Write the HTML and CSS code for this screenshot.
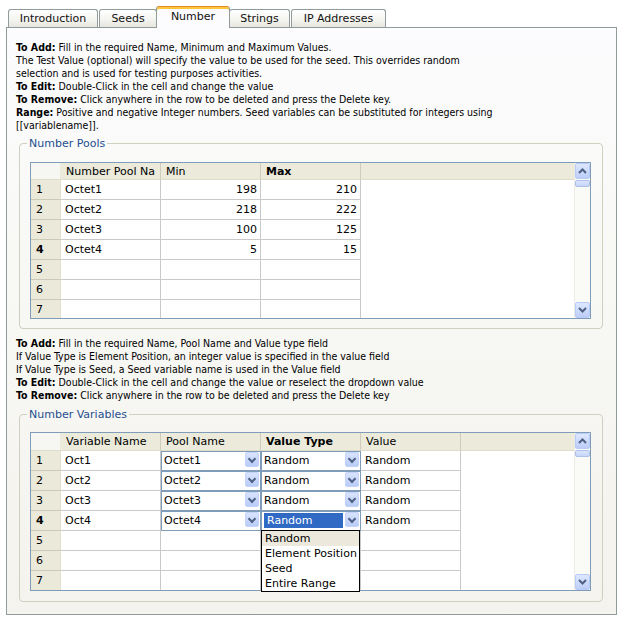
FILE: index.html
```html
<!DOCTYPE html>
<html>
<head>
<meta charset="utf-8">
<link rel="stylesheet" href="styles.css">
</head>
<body>
<div class="tabs">
  <div class="tab t-intro">Introduction</div>
  <div class="tab t-seeds">Seeds</div>
  <div class="tab t-number active">Number</div>
  <div class="tab t-strings">Strings</div>
  <div class="tab t-ip">IP Addresses</div>
</div>
<div class="panel">
  <p class="help help1"><b>To Add:</b> Fill in the required Name, Minimum and Maximum Values.<br>The Test Value (optional) will specify the value to be used for the seed. This overrides random<br>selection and is used for testing purposes activities.<br><b>To Edit:</b> Double-Click in the cell and change the value<br><b>To Remove:</b> Click anywhere in the row to be deleted and press the Delete key.<br><b>Range:</b> Positive and negative Integer numbers. Seed variables can be substituted for integers using<br>[[variablename]].</p>

  <fieldset class="group group1">
    <legend>Number Pools</legend>
    <div class="grid grid1">
      <div class="grid-body">
        <table class="tbl">
          <colgroup><col class="c-rh"><col class="c-w"><col class="c-w"><col class="c-w"><col></colgroup>
          <tr class="hdr"><th class="corner"></th><th>Number Pool Na</th><th>Min</th><th class="bold">Max</th><th class="fill"></th></tr>
          <tr><td class="rh">1</td><td>Octet1</td><td class="num">198</td><td class="num">210</td><td class="fill"></td></tr>
          <tr><td class="rh">2</td><td>Octet2</td><td class="num">218</td><td class="num">222</td><td class="fill"></td></tr>
          <tr><td class="rh">3</td><td>Octet3</td><td class="num">100</td><td class="num">125</td><td class="fill"></td></tr>
          <tr><td class="rh bold">4</td><td>Octet4</td><td class="num">5</td><td class="num">15</td><td class="fill"></td></tr>
          <tr><td class="rh">5</td><td></td><td></td><td></td><td class="fill"></td></tr>
          <tr><td class="rh">6</td><td></td><td></td><td></td><td class="fill"></td></tr>
          <tr class="last"><td class="rh">7</td><td></td><td></td><td></td><td class="fill"></td></tr>
        </table>
      </div>
      <div class="vscroll">
        <div class="sbtn"><svg width="9" height="6" viewBox="0 0 9 6"><polyline points="1,5 4.5,1.5 8,5" fill="none" stroke="#4d6185" stroke-width="2"/></svg></div>
        <div class="thumb"></div>
        <div class="track"></div>
        <div class="sbtn"><svg width="9" height="6" viewBox="0 0 9 6"><polyline points="1,1 4.5,4.5 8,1" fill="none" stroke="#4d6185" stroke-width="2"/></svg></div>
      </div>
    </div>
  </fieldset>

  <p class="help help2"><b>To Add:</b> Fill in the required Name, Pool Name and Value type field<br>If Value Type is Element Position, an integer value is specified in the value field<br>If Value Type is Seed, a Seed variable name is used in the Value field<br><b>To Edit:</b> Double-Click in the cell and change the value or reselect the dropdown value<br><b>To Remove:</b> Click anywhere in the row to be deleted and press the Delete key</p>

  <fieldset class="group group2">
    <legend>Number Variables</legend>
    <div class="grid grid2">
      <div class="grid-body">
        <table class="tbl">
          <colgroup><col class="c-rh"><col class="c-w"><col class="c-w"><col class="c-w"><col class="c-w"><col></colgroup>
          <tr class="hdr"><th class="corner"></th><th>Variable Name</th><th>Pool Name</th><th class="bold">Value Type</th><th>Value</th><th class="fill"></th></tr>
          <tr><td class="rh">1</td><td>Oct1</td><td class="combo"><div class="cb"><span class="cb-text">Octet1</span><span class="cb-btn"></span></div></td><td class="combo"><div class="cb"><span class="cb-text">Random</span><span class="cb-btn"></span></div></td><td>Random</td><td class="fill"></td></tr>
          <tr><td class="rh">2</td><td>Oct2</td><td class="combo"><div class="cb"><span class="cb-text">Octet2</span><span class="cb-btn"></span></div></td><td class="combo"><div class="cb"><span class="cb-text">Random</span><span class="cb-btn"></span></div></td><td>Random</td><td class="fill"></td></tr>
          <tr><td class="rh">3</td><td>Oct3</td><td class="combo"><div class="cb"><span class="cb-text">Octet3</span><span class="cb-btn"></span></div></td><td class="combo"><div class="cb"><span class="cb-text">Random</span><span class="cb-btn"></span></div></td><td>Random</td><td class="fill"></td></tr>
          <tr><td class="rh bold">4</td><td>Oct4</td><td class="combo"><div class="cb"><span class="cb-text">Octet4</span><span class="cb-btn"></span></div></td><td class="combo"><div class="cb open"><span class="cb-text sel">Random</span><span class="cb-btn"></span>
              <ul class="dropdown">
                <li class="hover">Random</li>
                <li>Element Position</li>
                <li>Seed</li>
                <li>Entire Range</li>
              </ul></div></td><td>Random</td><td class="fill"></td></tr>
          <tr><td class="rh">5</td><td></td><td></td><td></td><td></td><td class="fill"></td></tr>
          <tr><td class="rh">6</td><td></td><td></td><td></td><td></td><td class="fill"></td></tr>
          <tr class="last"><td class="rh">7</td><td></td><td></td><td></td><td></td><td class="fill"></td></tr>
        </table>
      </div>
      <div class="vscroll">
        <div class="sbtn"><svg width="9" height="6" viewBox="0 0 9 6"><polyline points="1,5 4.5,1.5 8,5" fill="none" stroke="#4d6185" stroke-width="2"/></svg></div>
        <div class="thumb"></div>
        <div class="track"></div>
        <div class="sbtn"><svg width="9" height="6" viewBox="0 0 9 6"><polyline points="1,1 4.5,4.5 8,1" fill="none" stroke="#4d6185" stroke-width="2"/></svg></div>
      </div>
    </div>
  </fieldset>
</div>
</body>
</html>
```

FILE: styles.css
```css
* { box-sizing: border-box; }
html, body { margin: 0; padding: 0; background: #fff; }
body {
  font-family: "DejaVu Sans Condensed", "DejaVu Sans", sans-serif;
  font-stretch: condensed;
  font-size: 10.5px;
  color: #000;
}

/* wide (Verdana-like) text */
.tab, .group legend, .tbl th, .tbl td, .cb-text {
  font-family: "DejaVu Sans", sans-serif;
  font-stretch: normal;
  font-size: 11px;
}

/* tabs */
.tabs {
  display: flex;
  align-items: flex-end;
  height: 27px;
  padding-left: 8px;
}
.tab {
  height: 18px;
  margin-right: 1px;
  border: 1px solid #919b9c;
  border-bottom: none;
  border-radius: 3px 3px 0 0;
  background: linear-gradient(#ffffff, #f3f3ef 60%, #e6e5de);
  text-align: center;
  line-height: 17px;
  color: #111;
}
.t-intro { width: 90px; }
.t-seeds { width: 58px; }
.t-number { width: 70px; }
.t-strings { width: 61px; }
.t-ip { width: 95px; }
.tab.active {
  position: relative;
  z-index: 2;
  height: 22px;
  width: 74px;
  margin: 0 -1px -1px -2px;
  background: #fcfcfe;
  border-top: 1px solid #e68b2c;
  box-shadow: inset 0 2px 0 #ffc73c;
  line-height: 20px;
}

/* panel */
.panel {
  margin-left: 6px;
  width: 611px;
  height: 588px;
  border: 1px solid #919b9c;
  background: linear-gradient(#fcfcfe, #f8f8f5 40%, #f4f3ee);
  padding: 13px 13px 12px 9px;
}
.help {
  margin: 0;
  line-height: 13px;
  white-space: nowrap;
}
.help b { font-weight: bold; }
.help2 { margin-top: 8px; }

.group {
  margin: 5px 0 0 3px;
  border: 1px solid #d0d0bf;
  border-radius: 4px;
  padding: 12px 11px 9px 10px;
  min-width: 0;
}
.group2 { margin-top: 6px; padding-top: 11px; padding-bottom: 10px; }
.group legend {
  margin-left: -3px;
  padding: 0 2px;
  color: #1f4f8f;
  line-height: 13px;
}

/* grid */
.grid {
  display: flex;
  border: 1px solid #7f9db9;
  background: #fff;
}
.grid1 { height: 157px; }
.grid2 { height: 159px; }
.grid-body { flex: 1; min-width: 0; }
.tbl {
  width: 100%;
  table-layout: fixed;
  border-collapse: separate;
  border-spacing: 0;
}
.c-rh { width: 30px; }
.c-w { width: 100px; }
.tbl th, .tbl td {
  padding: 0 0 0 4px;
  text-align: left;
  font-weight: normal;
  white-space: nowrap;
  overflow: hidden;
  height: 20px;
  border-right: 1px solid #c9c9c9;
  border-bottom: 1px solid #c9c9c9;
  vertical-align: middle;
}
.tbl .bold { font-weight: bold; }
.tbl tr.hdr th {
  height: 17px;
  background: #ebeadb;
  border-right: 1px solid #d0ccbc;
  border-bottom: 1px solid #e0dccc;
  padding-left: 5px;
}
.grid2 .tbl tr.hdr th { height: 18px; }
.tbl tr.hdr th.corner { background: #f6f6f2; border-right-color: #ebeadb; }
.tbl tr.hdr th.fill { border-right: none; }
.tbl td.rh {
  background: #ebe9da;
  border-right: 1px solid #e2dfd0;
  border-bottom: 1px solid #cdc9b9;
  padding-left: 5px;
}
.tbl td.num { text-align: right; padding: 0 3px 0 0; }
.tbl td.fill { border: none; }
.tbl tr.last td { border-bottom: none; height: 18px; }
.grid2 .tbl tr.last td { height: 19px; }

/* combo */
.tbl td.combo {
  padding: 0;
  overflow: visible;
  border-right: 1px solid #7f9db9;
  border-bottom: 1px solid #7f9db9;
  box-shadow: inset 1px 1px 0 #7f9db9;
}
.cb {
  position: relative;
  display: flex;
  align-items: flex-start;
  height: 19px;
  padding: 2px 1px 1px 2px;
}
.cb-text {
  flex: 1;
  padding-left: 1px;
  line-height: 16px;
  height: 15px;
  white-space: nowrap;
}
.cb-text.sel {
  background: #316ac5;
  color: #fff;
  padding-left: 3px;
  margin-right: 2px;
  margin-left: 1px;
}
.cb-btn {
  width: 14px;
  height: 15px;
  margin-top: -1px;
  border-radius: 2px;
  background: linear-gradient(#d9e4fd, #b9cbf8);
  border: 1px solid #c3d3fd;
  position: relative;
}
.cb-btn::after {
  content: "";
  position: absolute;
  left: 3px;
  top: 3px;
  width: 4px;
  height: 4px;
  border-right: 2px solid #4d6185;
  border-bottom: 2px solid #4d6185;
  transform: rotate(45deg);
}
.dropdown {
  position: absolute;
  z-index: 5;
  left: 0;
  top: 19px;
  width: 99px;
  margin: 0;
  padding: 0;
  list-style: none;
  background: #fff;
  border: 1px solid #000;
}
.dropdown li {
  height: 15px;
  line-height: 15px;
  padding-left: 3px;
}
.dropdown li.hover { background: #ece9dc; }

/* scrollbar */
.vscroll {
  width: 16px;
  display: flex;
  flex-direction: column;
  background: #fafaf7;
  border-left: 1px solid #ecebe4;
}
.sbtn {
  height: 16px;
  border: 1px solid #b8cbf6;
  border-radius: 2px;
  background: linear-gradient(#dde7fe, #bccdf8);
  display: flex;
  align-items: center;
  justify-content: center;
}
.thumb {
  height: 7px;
  margin-top: 1px;
  border: 1px solid #aebfe8;
  border-radius: 2px;
  background: linear-gradient(#dbe5fd, #c5d4f9);
}
.track { flex: 1; }
```
